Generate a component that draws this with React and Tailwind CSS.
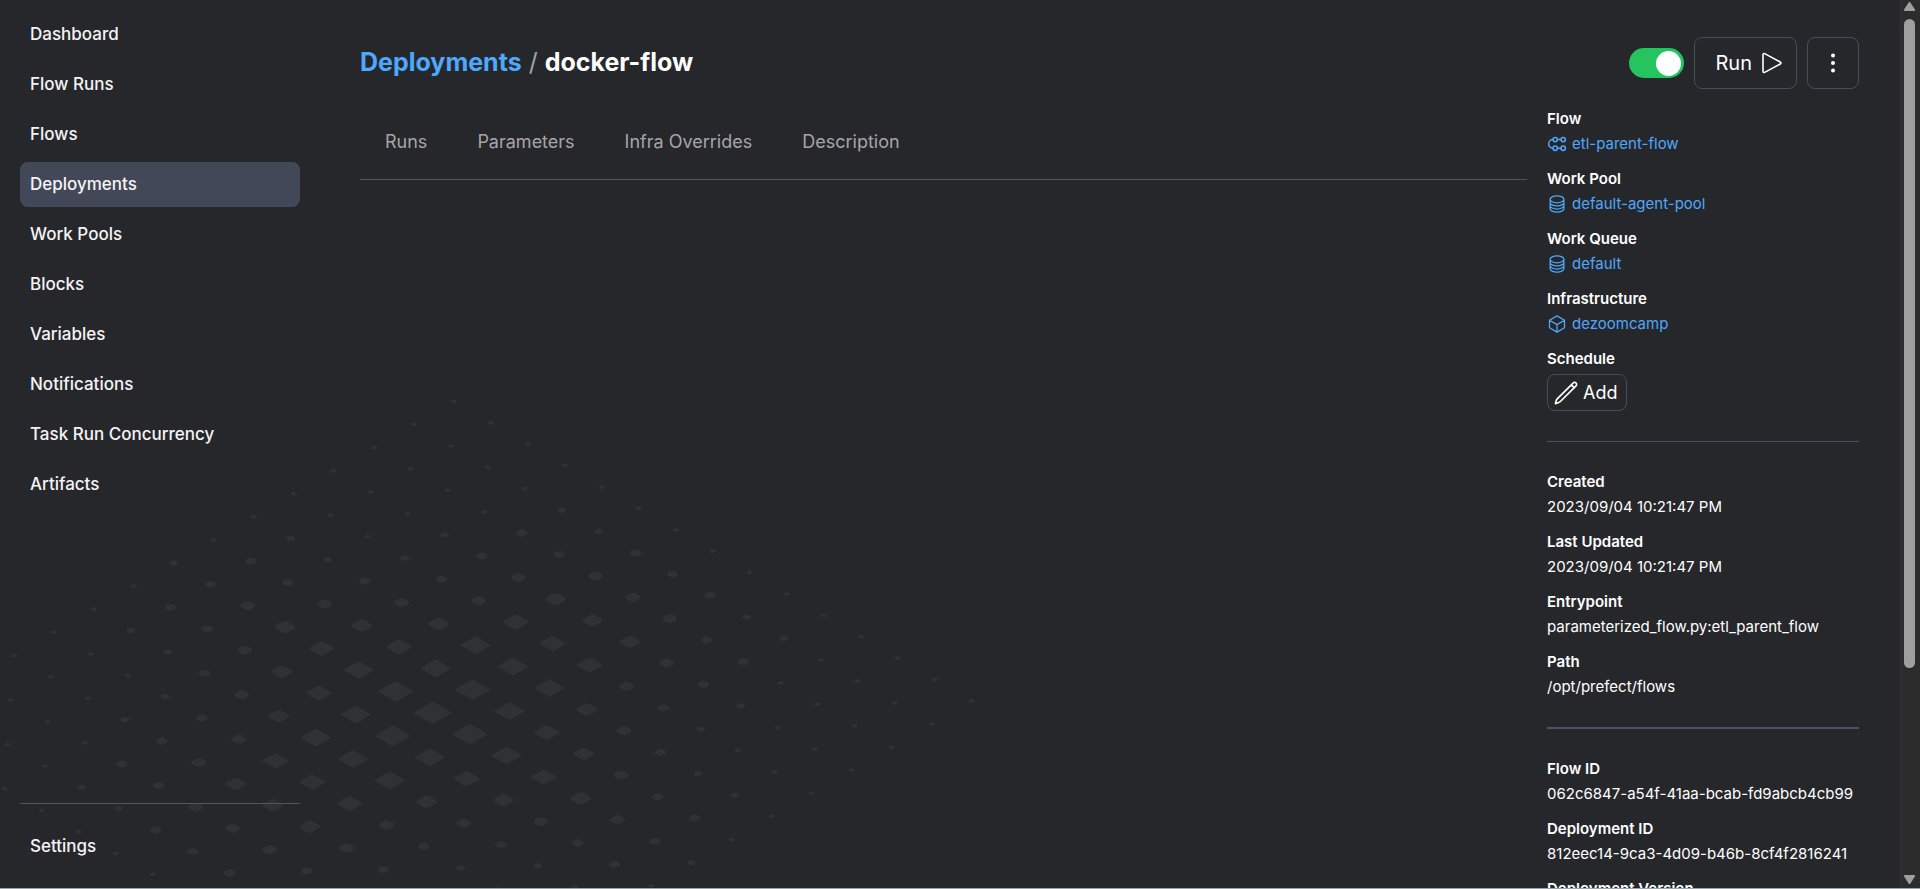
import React from "react";

const NAV = [
  "Dashboard",
  "Flow Runs",
  "Flows",
  "Deployments",
  "Work Pools",
  "Blocks",
  "Variables",
  "Notifications",
  "Task Run Concurrency",
  "Artifacts",
];

const TABS = ["Runs", "Parameters", "Infra Overrides", "Description"];

// Side length and corner radius of each tile size, smallest first.
const TILES = [
  [5, 2.4],
  [7, 3.4],
  [9.2, 4.4],
  [11, 4],
  [14, 3.7],
  [16, 2.5],
  [18.3, 1.6],
  [21, 1.2],
  [22.6, 1.2],
];

// Tile size index for every cell of the 15 x 15 isometric field.
const FIELD = [
  "000000000000000",
  "000011222110000",
  "000022333220000",
  "000123444321000",
  "000123555321000",
  "011234666432110",
  "022345676543220",
  "123456787654321",
  "022345676543220",
  "011234666432110",
  "000123555321000",
  "000123444321000",
  "000022333220000",
  "000011222110000",
  "000000000000000",
];

function Backdrop() {
  return (
    <svg aria-hidden="true" className="absolute inset-0 size-full" fill="#303135">
      {FIELD.map((row, j) =>
        [...row].map((size, i) => {
          const [side, radius] = TILES[Number(size)];
          const x = 453.7 + 37 * i - 40 * j;
          const y = 401.3 + 21.4 * i + 23.1 * j;
          return (
            <rect
              key={`${i}-${j}`}
              x={-side / 2}
              y={-side / 2}
              width={side}
              height={side}
              rx={radius}
              transform={`matrix(0.866 0.5 -0.866 0.5 ${x} ${y})`}
            />
          );
        })
      )}
    </svg>
  );
}

function FlowIcon() {
  return (
    <svg viewBox="0 0 20 20" className="size-5" fill="none" stroke="currentColor" strokeWidth="1.5" aria-hidden="true">
      <circle cx="8.2" cy="5.6" r="2.2" />
      <circle cx="16.2" cy="5.6" r="2.2" />
      <circle cx="8.2" cy="14.2" r="2.2" />
      <circle cx="16.2" cy="14.2" r="2.2" />
      <path d="M10.400 5.600h3.600M10.400 14.200h3.600M6 5.600a4.300 4.300 0 0 0 0 8.600" />
    </svg>
  );
}

function StackIcon() {
  return (
    <svg viewBox="0 0 24 24" className="size-5" fill="none" stroke="currentColor" strokeWidth="1.5" strokeLinecap="round" strokeLinejoin="round" aria-hidden="true">
      <path d="M20.25 6.375c0 2.278-3.694 4.125-8.25 4.125S3.75 8.653 3.75 6.375m16.5 0c0-2.278-3.694-4.125-8.25-4.125S3.75 4.097 3.75 6.375m16.5 0v11.25c0 2.278-3.694 4.125-8.25 4.125s-8.25-1.847-8.25-4.125V6.375m16.5 0v3.75m-16.5-3.75v3.75m16.5 0v3.75C20.25 16.153 16.556 18 12 18s-8.25-1.847-8.25-4.125v-3.75m16.5 0c0 2.278-3.694 4.125-8.25 4.125s-8.25-1.847-8.25-4.125" />
    </svg>
  );
}

function CubeIcon() {
  return (
    <svg viewBox="0 0 24 24" className="size-5" fill="none" stroke="currentColor" strokeWidth="1.5" strokeLinecap="round" strokeLinejoin="round" aria-hidden="true">
      <path d="M21 7.5l-9-5.25L3 7.5m18 0l-9 5.25m9-5.25v9l-9 5.25M3 7.5l9 5.25M3 7.5v9l9 5.25m0-9v9" />
    </svg>
  );
}

function PlayIcon() {
  return (
    <svg viewBox="0 0 24 24" className="size-6" fill="none" stroke="currentColor" strokeWidth="1.6" strokeLinejoin="round" aria-hidden="true">
      <path d="M3 3.600v16.800c0 .9.900 1.400 1.700 1l15.600-8.400a1.100 1.100 0 0 0 0-2L4.700 2.600c-.8-.4-1.700.1-1.700 1z" />
    </svg>
  );
}

function PencilIcon() {
  return (
    <svg viewBox="1 1 22 22" className="size-6" fill="none" stroke="currentColor" strokeWidth="1.5" strokeLinecap="round" strokeLinejoin="round" aria-hidden="true">
      <path d="M16.862 4.487l1.687-1.688a1.875 1.875 0 1 1 2.652 2.652L6.832 19.82a4.5 4.5 0 0 1-1.897 1.13l-2.685.8.8-2.685a4.5 4.5 0 0 1 1.13-1.897L16.863 4.487zm0 0L19.5 7.125" />
    </svg>
  );
}

function Field({ label, children }) {
  return (
    <div>
      <dt className="font-semibold">{label}</dt>
      <dd>{children}</dd>
    </div>
  );
}

function FieldLink({ icon, children }) {
  return (
    <a href="#" className="flex items-center gap-[5px] text-[#4ea8fb]">
      {icon}
      {children}
    </a>
  );
}

function Details() {
  return (
    <aside className="w-[312px] shrink-0 pt-[2px] text-[15px] leading-[25px] text-white">
      <dl className="flex flex-col gap-[10px]">
        <Field label="Flow">
          <FieldLink icon={<FlowIcon />}>etl-parent-flow</FieldLink>
        </Field>
        <Field label="Work Pool">
          <FieldLink icon={<StackIcon />}>default-agent-pool</FieldLink>
        </Field>
        <Field label="Work Queue">
          <FieldLink icon={<StackIcon />}>default</FieldLink>
        </Field>
        <Field label="Infrastructure">
          <FieldLink icon={<CubeIcon />}>dezoomcamp</FieldLink>
        </Field>
        <Field label="Schedule">
          <div className="flex pt-[3px]">
            <button type="button" className="flex h-[37px] items-center gap-[5px] rounded-lg border border-[#4b4c55] pr-[9px] pl-[6px] text-[18px]">
              <PencilIcon />
              Add
            </button>
          </div>
        </Field>
      </dl>
      <hr className="mt-[30px] mb-[27px] border-[#4f5059]" />
      <dl className="flex flex-col gap-[10px]">
        <Field label="Created">2023/09/04 10:21:47 PM</Field>
        <Field label="Last Updated">2023/09/04 10:21:47 PM</Field>
        <Field label="Entrypoint">parameterized_flow.py:etl_parent_flow</Field>
        <Field label="Path">/opt/prefect/flows</Field>
      </dl>
      <hr className="mt-[28px] mb-[27px] border-t-2 border-[#4f5059]" />
      <dl className="flex flex-col gap-[10px]">
        <Field label="Flow ID">062c6847-a54f-41aa-bcab-fd9abcb4cb99</Field>
        <Field label="Deployment ID">812eec14-9ca3-4d09-b46b-8cf4f2816241</Field>
        <Field label="Deployment Version" />
      </dl>
    </aside>
  );
}

function Sidebar() {
  return (
    <nav className="flex w-80 shrink-0 flex-col px-5 pt-3 pb-[19px] text-[17px] font-medium text-[#f4f4f5]">
      <ul className="flex flex-col gap-[5px]">
        {NAV.map((item) => (
          <li key={item}>
            <a
              href="#"
              className={
                item === "Deployments"
                  ? "flex h-[45px] items-center rounded-lg bg-[#434859] px-[10px]"
                  : "flex h-[45px] items-center rounded-lg px-[10px]"
              }
            >
              {item}
            </a>
          </li>
        ))}
      </ul>
      <div className="mt-auto border-t border-[#54555a] pt-5">
        <a href="#" className="flex h-[45px] items-center rounded-lg px-[10px]">
          Settings
        </a>
      </div>
    </nav>
  );
}

function Scrollbar() {
  return (
    <div aria-hidden="true" className="flex w-[21px] shrink-0 flex-col items-center bg-[#2c2c2c] pt-[2px] pb-1">
      <svg viewBox="0 0 11 9" className="h-[9px] w-[11px]" fill="#9f9f9f">
        <path d="M4.600.6a1.100 1.100 0 0 1 1.800 0L10.900 7.500a.9.900 0 0 1-.8 1.500H.9A.9.900 0 0 1 .1 7.500z" />
      </svg>
      <div className="flex w-[11px] grow flex-col py-2">
        <div className="h-[76.5%] rounded-full bg-[#9f9f9f]" />
      </div>
      <svg viewBox="0 0 11 9" className="h-[9px] w-[11px]" fill="#9f9f9f">
        <path d="M4.600 8.400a1.100 1.100 0 0 0 1.800 0L10.900 1.500a.9.900 0 0 0-.8-1.500H.9A.9.900 0 0 0 .1 1.500z" />
      </svg>
    </div>
  );
}

export default function App() {
  return (
    <div className="relative flex h-screen overflow-hidden border-b border-[#98a4ad] bg-[#26272b] font-[Inter,sans-serif] antialiased">
      <Backdrop />
      <div className="relative flex min-w-0 grow">
        <Sidebar />
        <main className="flex min-w-0 grow flex-col px-10 pt-[37px]">
          <header className="flex items-center gap-[10px]">
            <h1 className="flex grow gap-[7px] text-[25px] font-bold text-white">
              <a href="#" className="text-[#4ea8fb]">
                Deployments
              </a>
              <span className="font-normal text-[#a1a1aa]">/</span>
              <span>docker-flow</span>
            </h1>
            <label className="relative flex h-[30px] w-[55px] cursor-pointer items-center rounded-full bg-[#24c55f] pr-[3px]">
              <input type="checkbox" defaultChecked aria-label="Deployment enabled" className="absolute inset-0 size-full cursor-pointer appearance-none rounded-full" />
              <span className="ml-auto size-[25px] rounded-full bg-white" />
            </label>
            <button type="button" className="flex h-[52px] items-center gap-2 rounded-lg border border-[#4b4c55] pr-3 pl-5 text-[20px] text-white">
              Run
              <PlayIcon />
            </button>
            <button type="button" aria-label="More actions" className="flex size-[52px] items-center justify-center rounded-lg border border-[#4b4c55] text-white">
              <svg viewBox="0 0 24 24" className="size-6" fill="currentColor" aria-hidden="true">
                <circle cx="12" cy="4.500" r="2" />
                <circle cx="12" cy="12" r="2" />
                <circle cx="12" cy="19.500" r="2" />
              </svg>
            </button>
          </header>
          <div className="flex items-start gap-5 pt-[15px]">
            <div role="tablist" className="flex h-[76px] min-w-0 grow border-b border-[#54555a] text-[18px] text-[#a5a5a9]">
              {TABS.map((tab) => (
                <button key={tab} type="button" role="tab" className="px-[25px]">
                  {tab}
                </button>
              ))}
            </div>
            <Details />
          </div>
        </main>
      </div>
      <Scrollbar />
    </div>
  );
}
